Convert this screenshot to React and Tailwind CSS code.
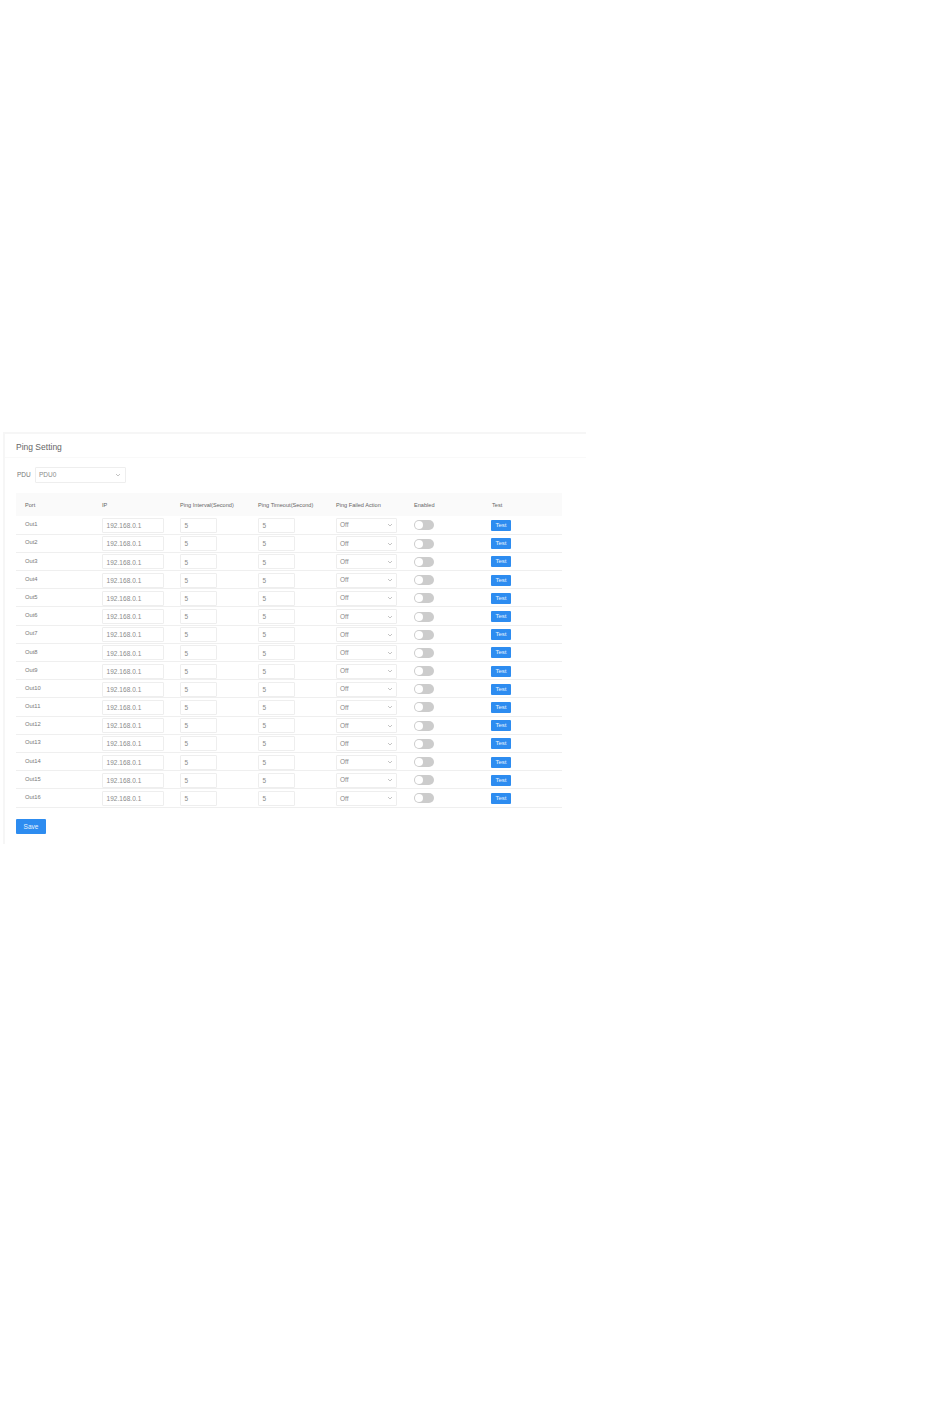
import React from "react";

const ports = Array.from({ length: 16 }, (_, i) => `Out${i + 1}`);
const headers = ["Port", "IP", "Ping Interval(Second)", "Ping Timeout(Second)", "Ping Failed Action", "Enabled", "Test"];

const Chevron = () => (
  <svg width="6" height="4" viewBox="0 0 6 4" fill="none" className="shrink-0">
    <path d="M1 1l2 2 2-2" stroke="#aaa" strokeWidth="0.7" />
  </svg>
);

const Field = ({ value, className }) => (
  <div className={`flex h-[15px] items-center rounded-[1px] border border-[#eeeeee] bg-white px-[3.5px] pt-[1px] text-[6.5px] text-[#8a8a8a] ${className}`}>
    {value}
  </div>
);

const Row = ({ name }) => (
  <tr className="h-[18.2px] border-b border-[#efefef] [&>td]:pt-[1px]">
    <td className="pl-[9px] align-middle text-[5.8px] leading-none text-[#777]">
      <div className="-mt-[1px]">{name}</div>
    </td>
    <td className="pl-2 align-middle">
      <Field value="192.168.0.1" className="w-[62px] tracking-[0.05px]" />
    </td>
    <td className="pl-2 align-middle">
      <Field value="5" className="w-[37px]" />
    </td>
    <td className="pl-2 align-middle">
      <Field value="5" className="w-[37px]" />
    </td>
    <td className="pl-2 align-middle">
      <div className="flex h-[15px] w-[61px] items-center justify-between rounded-[1px] border border-[#eeeeee] bg-white pl-[3px] pr-[3px] text-[6.5px] text-[#8a8a8a]">
        <span>Off</span>
        <Chevron />
      </div>
    </td>
    <td className="pl-2 align-middle">
      <div className="flex h-[10px] w-[20px] items-center rounded-full bg-[#cccccc] pl-[1px]">
        <div className="h-[8px] w-[8px] rounded-full bg-white" />
      </div>
    </td>
    <td className="pl-[7px] align-middle">
      <div className="flex h-[11px] w-[20px] items-center justify-center rounded-[1px] bg-[#2d8cf0] text-[6px] text-[#e8f3fe]">
        Test
      </div>
    </td>
  </tr>
);

export default function App() {
  return (
    <div className="min-h-[1408px] bg-white pt-[432px] font-['Liberation_Sans',Arial,sans-serif]">
      <div className="ml-[3px] h-[412px] w-[583px] border-l-2 border-t-2 border-[#f6f6f6] bg-white">
        <div className="flex h-[24px] items-center border-b border-[#f9f9f9] pl-[11px] pt-[3px] text-[8.5px] text-[#666]">
          Ping Setting
        </div>
        <div className="pl-[11px] pr-[24px]">
          <div className="mt-[9px] flex items-center text-[6.5px] text-[#777]">
            <span className="w-[19px] pl-[1px]">PDU</span>
            <div className="flex h-[16px] w-[91px] items-center justify-between rounded-[1px] border border-[#eeeeee] pl-[3px] pr-[4px] text-[6.5px] text-[#8a8a8a]">
              <span>PDU0</span>
              <Chevron />
            </div>
          </div>
          <table className="mt-[10px] w-[546px] table-fixed border-collapse">
            <thead>
              <tr className="h-[23px] bg-[#fafafa]">
                {headers.map((h, i) => (
                  <th key={h} className={`pt-[1px] text-left text-[5.6px] font-normal text-[#666] ${i === 0 ? "pl-[9px]" : "pl-2"}`}>
                    {h}
                  </th>
                ))}
              </tr>
            </thead>
            <tbody>
              {ports.map((p) => (
                <Row key={p} name={p} />
              ))}
            </tbody>
          </table>
          <button className="mt-[11px] flex h-[15px] w-[30px] items-center justify-center rounded-[1px] bg-[#2d8cf0] pt-[1px] text-[6.5px] text-[#e8f3fe]">
            Save
          </button>
        </div>
      </div>
    </div>
  );
}
